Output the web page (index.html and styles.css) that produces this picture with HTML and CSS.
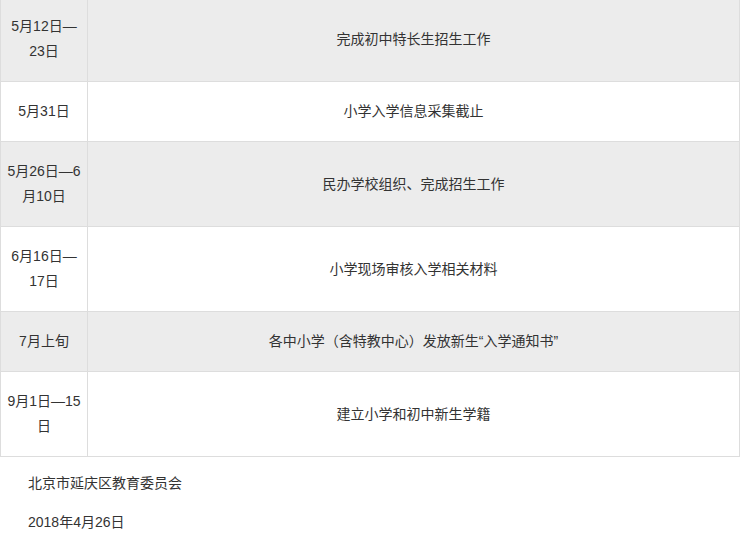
FILE: index.html
```html
<!DOCTYPE html>
<html lang="zh-CN">
<head>
<meta charset="utf-8">
<link rel="stylesheet" href="styles.css">
</head>
<body>
<div class="page">
  <table class="schedule">
    <tbody>
      <tr class="alt"><td class="date">5月12日—23日</td><td class="task">完成初中特长生招生工作</td></tr>
      <tr><td class="date">5月31日</td><td class="task">小学入学信息采集截止</td></tr>
      <tr class="alt"><td class="date">5月26日—6月10日</td><td class="task">民办学校组织、完成招生工作</td></tr>
      <tr><td class="date">6月16日—17日</td><td class="task">小学现场审核入学相关材料</td></tr>
      <tr class="alt"><td class="date">7月上旬</td><td class="task">各中小学（含特教中心）发放新生“入学通知书”</td></tr>
      <tr><td class="date">9月1日—15日</td><td class="task">建立小学和初中新生学籍</td></tr>
    </tbody>
  </table>
  <p class="note">北京市延庆区教育委员会</p>
  <p class="note">2018年4月26日</p>
</div>
</body>
</html>
```

FILE: styles.css
```css
html, body {
  margin: 0;
  padding: 0;
  background: #fff;
}
body {
  font-family: "Liberation Sans", "Noto Sans CJK SC", sans-serif;
  font-size: 14px;
  line-height: 25px;
  color: #333;
}
.page {
  margin-top: -4px;
}
.schedule {
  width: 740px;
  border-collapse: collapse;
  table-layout: fixed;
}
.schedule td {
  border: 1px solid #ddd;
  padding: 17px 5px;
  text-align: center;
  vertical-align: middle;
  word-break: normal;
  overflow-wrap: anywhere;
}
.schedule td.date {
  width: 76px;
}
.schedule tr.alt td {
  background: #ececec;
}
.note {
  margin: 14px 0;
  text-indent: 28px;
}
```
